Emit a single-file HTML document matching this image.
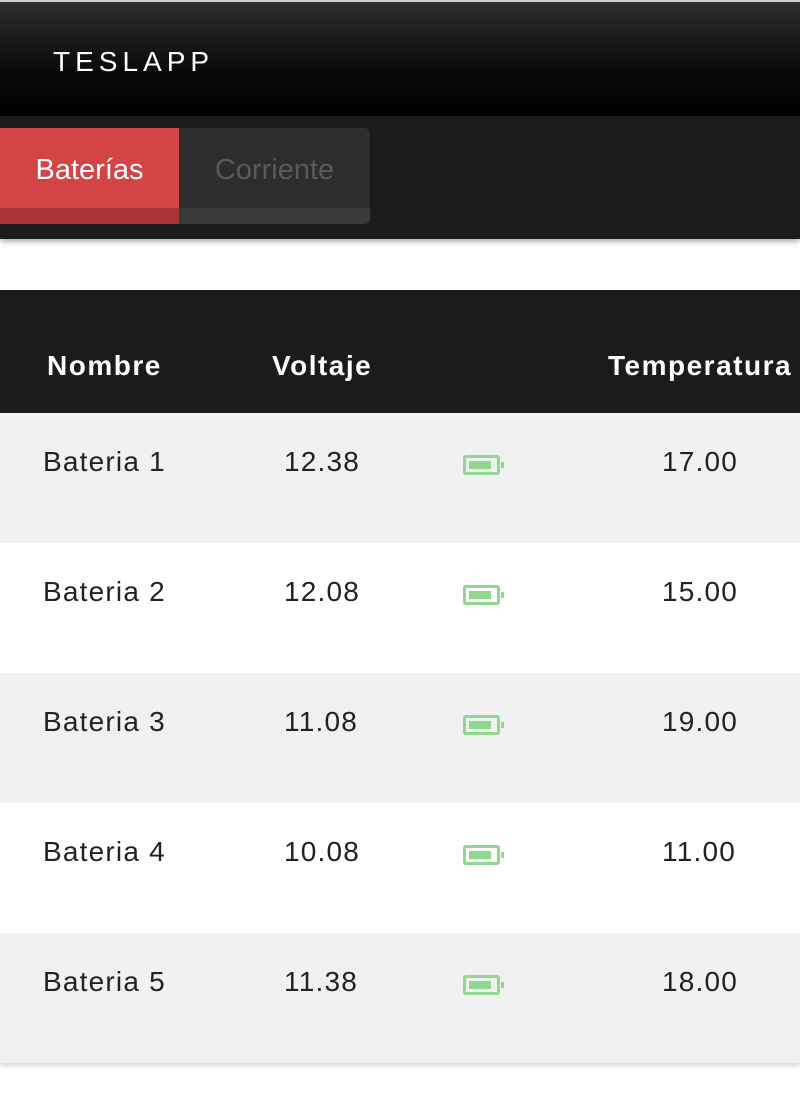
<!DOCTYPE html>
<html><head><style>
body{margin:0;width:800px;height:1100px;background:#fff;font-family:"Liberation Sans",sans-serif;overflow:hidden;position:relative}
.hdr{position:absolute;left:0;top:0;width:800px;height:116px;background:linear-gradient(#2e2e2e,#0a0a0a 60%,#000);border-top:2px solid #ccc;box-sizing:border-box}
.logo{position:absolute;left:53px;top:44px;color:#fff;font-size:28px;letter-spacing:5px;font-weight:300}
.bar{position:absolute;left:0;top:116px;width:800px;height:123px;background:#1b1b1b;box-shadow:0 3px 5px rgba(0,0,0,.3)}
.t1{position:absolute;left:0;top:12px;width:179px;height:96px;background:#d44444;border-bottom:16px solid #a83535;box-sizing:border-box;color:#fff;font-size:29px;text-align:center;line-height:84px;padding-left:0}
.t2{position:absolute;left:179px;top:12px;width:191px;height:96px;background:#2d2d2d;border-bottom:16px solid #3a3a3a;box-sizing:border-box;border-radius:0 6px 6px 0;color:#5a5a5a;font-size:29px;text-align:center;line-height:84px}
.th{position:absolute;left:0;top:290px;width:800px;height:123px;background:#1b1b1b;color:#fff;font-weight:bold;font-size:28px;letter-spacing:1.5px}
.th span,.row span{position:absolute;top:0}
.row{position:absolute;left:0;width:800px;height:130px;font-size:28px;color:#222;letter-spacing:1.2px}
.g{background:#f1f1f1}
.bat{position:absolute;left:463px;width:31px;height:14px;border:3px solid #8fd88f;border-radius:3px}
.bat:before{content:"";position:absolute;left:3px;top:3px;width:22px;height:8px;background:#8fd88f}
.bat:after{content:"";position:absolute;right:-7px;top:4px;width:3px;height:6px;background:#8fd88f}
</style></head><body>
<div class="hdr"><div class="logo">TESLAPP</div></div>
<div class="bar"><div class="t1">Baterías</div><div class="t2">Corriente</div></div>
<div class="th"><span style="left:47px;top:60px">Nombre</span><span style="left:272px;top:60px">Voltaje</span><span style="left:608px;top:60px">Temperatura</span></div>
<div class="row g" style="top:413px"><span style="left:43px;top:33px">Bateria 1</span><span style="left:284px;top:33px">12.38</span><div class="bat" style="top:42px"></div><span style="left:662px;top:33px">17.00</span></div>
<div class="row" style="top:543px"><span style="left:43px;top:33px">Bateria 2</span><span style="left:284px;top:33px">12.08</span><div class="bat" style="top:42px"></div><span style="left:662px;top:33px">15.00</span></div>
<div class="row g" style="top:673px"><span style="left:43px;top:33px">Bateria 3</span><span style="left:284px;top:33px">11.08</span><div class="bat" style="top:42px"></div><span style="left:662px;top:33px">19.00</span></div>
<div class="row" style="top:803px"><span style="left:43px;top:33px">Bateria 4</span><span style="left:284px;top:33px">10.08</span><div class="bat" style="top:42px"></div><span style="left:662px;top:33px">11.00</span></div>
<div class="row g" style="top:933px;box-shadow:0 3px 4px rgba(0,0,0,.15)"><span style="left:43px;top:33px">Bateria 5</span><span style="left:284px;top:33px">11.38</span><div class="bat" style="top:42px"></div><span style="left:662px;top:33px">18.00</span></div>
</body></html>
